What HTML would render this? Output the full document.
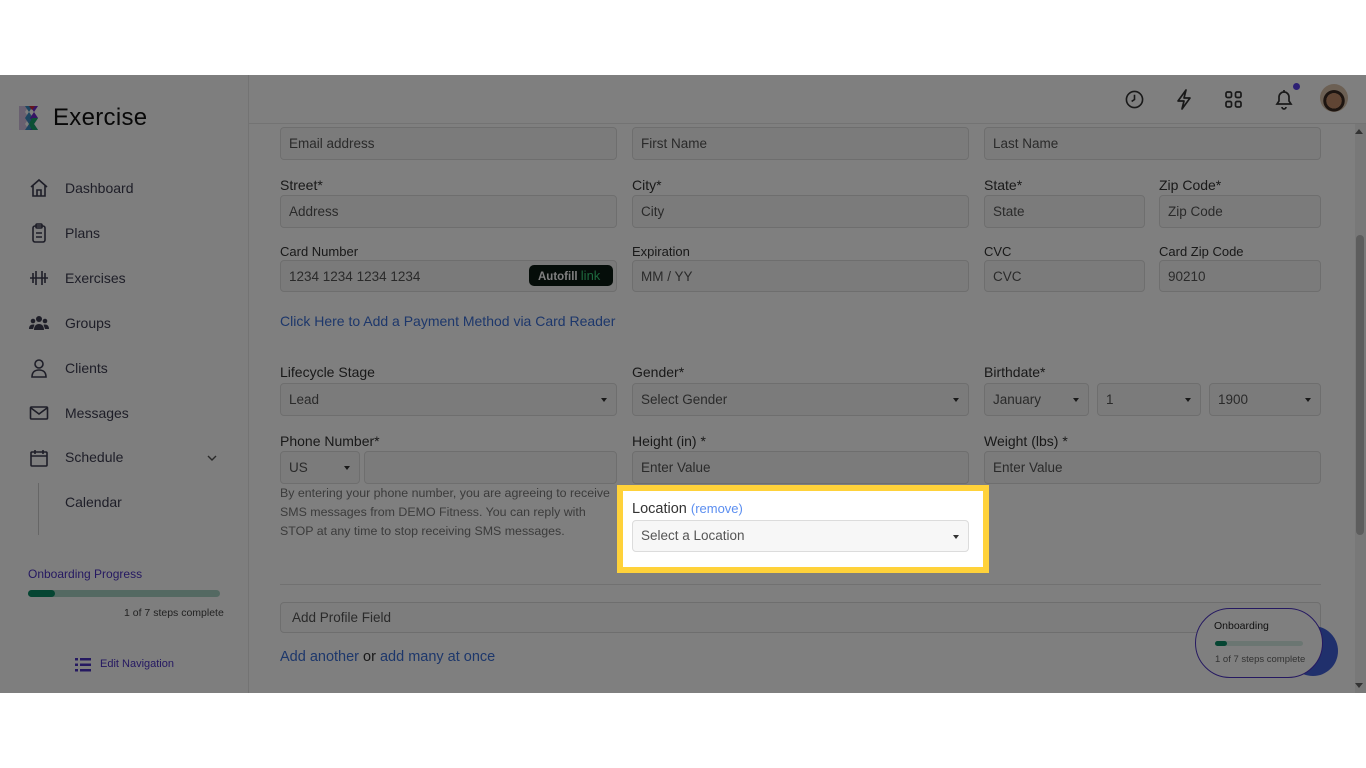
<!DOCTYPE html>
<html><head><meta charset="utf-8"><style>
*{box-sizing:border-box;margin:0;padding:0}
body{width:1366px;height:768px;background:#fff;font-family:"Liberation Sans",Arial,sans-serif;position:relative;overflow:hidden}
.a{position:absolute}
.app{left:0;top:75px;width:1366px;height:618px;background:#fff;overflow:hidden}
.side{left:0;top:0;width:249px;height:618px;background:#fcfcfc;border-right:1px solid #e6e6e6}
.hdr{left:249px;top:0;width:1117px;height:49px;border-bottom:1px solid #e6e6e6;background:#fff}
.lbl{font-size:14px;color:#333}
.in{border:1px solid #dcdcdc;border-radius:4px;background:#f7f7f7;height:33px;font-size:13.5px;color:#555;padding:0 8px;line-height:31px}
.sel::after{content:"";position:absolute;right:9px;top:14px;border:3.5px solid transparent;border-top:4px solid #333}
.nav{font-size:14px;color:#3d3d50;left:65px}
.ic{left:29px;width:20px;height:20px}
.link{color:#3b6fd6}
</style></head><body>
<div class="a app">
 <div class="a side">
  <svg class="a" style="left:17px;top:29px" width="27" height="27" viewBox="0 0 27 27"><path d="M2 2h10l-4 6 4 6-4 6 4 6H2z" fill="#c7b0d8" opacity=".8"/><path d="M8 2h8l-4 6 4 6-4 6 4 6H8l4-6-4-6 4-6z" fill="#3a8ac0"/><path d="M13 2h8l-4 6 4 6-4 6 4 6h-8l4-6-4-6 4-6z" fill="#6a28c8"/><path d="M15 14h6l-4 6 4 6h-6l-3-6z" fill="#16a06a"/><path d="M12 2h6l-3 4z" fill="#c82838"/></svg>
  <div class="a" style="left:53px;top:29px;font-size:24px;color:#111;letter-spacing:.3px">Exercise</div>
  <svg class="a ic" style="top:103px" viewBox="0 0 20 20" fill="none" stroke="#3d3d50" stroke-width="1.6"><path d="M2 9l8-7 8 7M4 7v11h12V7M8 18v-6h4v6"/></svg>
  <div class="a nav" style="top:105px">Dashboard</div>
  <svg class="a ic" style="top:148px" viewBox="0 0 20 20" fill="none" stroke="#3d3d50" stroke-width="1.6"><rect x="4" y="3" width="12" height="16" rx="2"/><rect x="7" y="1" width="6" height="4" rx="1"/><path d="M7 10h6M7 14h6"/></svg>
  <div class="a nav" style="top:150px">Plans</div>
  <svg class="a ic" style="top:193px" viewBox="0 0 20 20" fill="none" stroke="#3d3d50" stroke-width="1.6"><path d="M1 10h18M4 5v10M7 3v14M13 3v14M16 5v10"/></svg>
  <div class="a nav" style="top:195px">Exercises</div>
  <svg class="a ic" style="top:238px" viewBox="0 0 20 20" fill="#3d3d50"><circle cx="10" cy="6" r="3"/><circle cx="4" cy="8" r="2.3"/><circle cx="16" cy="8" r="2.3"/><path d="M5 17c0-4 2-6 5-6s5 2 5 6zM0 16c0-3 1.5-4.5 4-4.5 1 0 1.5.3 1.5.3L4 16zM20 16c0-3-1.5-4.5-4-4.5-1 0-1.5.3-1.5.3L16 16z"/></svg>
  <div class="a nav" style="top:240px">Groups</div>
  <svg class="a ic" style="top:283px" viewBox="0 0 20 20" fill="none" stroke="#3d3d50" stroke-width="1.6"><circle cx="10" cy="6" r="4"/><path d="M3 19c0-5 3-7 7-7s7 2 7 7z"/></svg>
  <div class="a nav" style="top:285px">Clients</div>
  <svg class="a ic" style="top:328px" viewBox="0 0 20 20" fill="none" stroke="#3d3d50" stroke-width="1.6"><rect x="1.5" y="4" width="17" height="12" rx="1"/><path d="M2 5l8 6 8-6"/></svg>
  <div class="a nav" style="top:330px">Messages</div>
  <svg class="a ic" style="top:373px" viewBox="0 0 20 20" fill="none" stroke="#3d3d50" stroke-width="1.6"><rect x="2" y="4" width="16" height="14" rx="1"/><path d="M2 8h16M6 2v4M14 2v4"/></svg>
  <div class="a nav" style="top:374px">Schedule</div>
  <svg class="a" style="left:206px;top:378px" width="12" height="10" viewBox="0 0 12 10" fill="none" stroke="#555" stroke-width="1.4"><path d="M2 3l4 4 4-4"/></svg>
  <div class="a" style="left:38px;top:408px;width:1px;height:52px;background:#ccc"></div>
  <div class="a nav" style="top:419px">Calendar</div>
  <div class="a" style="left:28px;top:492px;font-size:12px;color:#4b32c3">Onboarding Progress</div>
  <div class="a" style="left:28px;top:515px;width:192px;height:7px;border-radius:4px;background:#a9d3c5"></div>
  <div class="a" style="left:28px;top:515px;width:27px;height:7px;border-radius:4px;background:#0a8a64"></div>
  <div class="a" style="left:124px;top:532px;font-size:10.5px;color:#444">1 of 7 steps complete</div>
  <svg class="a" style="left:75px;top:583px" width="16" height="14" viewBox="0 0 16 14" fill="#4b32c3"><rect x="0" y="0" width="3" height="2.5"/><rect x="0" y="5.5" width="3" height="2.5"/><rect x="0" y="11" width="3" height="2.5"/><rect x="5" y="0" width="11" height="2.5"/><rect x="5" y="5.5" width="11" height="2.5"/><rect x="5" y="11" width="11" height="2.5"/></svg>
  <div class="a" style="left:100px;top:583px;font-size:11px;color:#4b32c3">Edit Navigation</div>
 </div>
 <div class="a hdr">
  <svg class="a" style="left:876px;top:15px" width="19" height="19" viewBox="0 0 20 20" fill="none" stroke="#333" stroke-width="1.7"><circle cx="10" cy="10" r="8.5"/><path d="M10 5v5l-3 2"/></svg>
  <svg class="a" style="left:927px;top:14px" width="16" height="21" viewBox="0 0 16 21" fill="none" stroke="#333" stroke-width="1.7" stroke-linejoin="round"><path d="M10 1L2 12h6l-2 8 8-11H8z"/></svg>
  <svg class="a" style="left:976px;top:16px" width="17" height="17" viewBox="0 0 17 17" fill="none" stroke="#333" stroke-width="1.7"><rect x="1" y="1" width="5.5" height="5.5" rx="1.5"/><rect x="10.5" y="1" width="5.5" height="5.5" rx="1.5"/><rect x="1" y="10.5" width="5.5" height="5.5" rx="1.5"/><rect x="10.5" y="10.5" width="5.5" height="5.5" rx="1.5"/></svg>
  <svg class="a" style="left:1025px;top:14px" width="20" height="21" viewBox="0 0 20 21" fill="none" stroke="#333" stroke-width="1.7"><path d="M3 15h14l-2-3V8a5 5 0 00-10 0v4z"/><path d="M8 18a2 2 0 004 0M10 1v2"/></svg>
  <div class="a" style="left:1044px;top:8px;width:7px;height:7px;border-radius:50%;background:#5a40e8"></div>
  <div class="a" style="left:1071px;top:9px;width:28px;height:28px;border-radius:50%;background:radial-gradient(circle at 50% 60%,#c08a68 0 35%,#3a2a22 36% 48%,#d8c0a8 50%)"></div>
 </div>
 <div class="a" style="left:1355px;top:49px;width:11px;height:569px;background:#f1f1f1"></div>
 <div class="a" style="left:1356px;top:160px;width:8px;height:300px;border-radius:4px;background:#bbb"></div>
 <div class="a" style="left:1355px;top:54px;border:4px solid transparent;border-bottom:5px solid #666;border-top:0"></div>
 <div class="a" style="left:1355px;top:608px;border:4px solid transparent;border-top:5px solid #666;border-bottom:0"></div>
</div>

<div class="a in" style="left:280px;top:127px;width:337px">Email address</div>
<div class="a in" style="left:632px;top:127px;width:337px">First Name</div>
<div class="a in" style="left:984px;top:127px;width:337px">Last Name</div>
<div class="a lbl" style="left:280px;top:177px">Street*</div>
<div class="a lbl" style="left:632px;top:177px">City*</div>
<div class="a lbl" style="left:984px;top:177px">State*</div>
<div class="a lbl" style="left:1159px;top:177px">Zip Code*</div>
<div class="a in" style="left:280px;top:195px;width:337px">Address</div>
<div class="a in" style="left:632px;top:195px;width:337px">City</div>
<div class="a in" style="left:984px;top:195px;width:161px">State</div>
<div class="a in" style="left:1159px;top:195px;width:162px">Zip Code</div>
<div class="a lbl" style="left:280px;top:244px;font-size:13px">Card Number</div>
<div class="a lbl" style="left:632px;top:244px;font-size:13px">Expiration</div>
<div class="a lbl" style="left:984px;top:244px;font-size:13px">CVC</div>
<div class="a lbl" style="left:1159px;top:244px;font-size:13px">Card Zip Code</div>
<div class="a in" style="left:280px;top:260px;width:337px;height:32px;background:#f5f5f5">1234 1234 1234 1234</div>
<div class="a" style="left:529px;top:265px;width:84px;height:21px;border-radius:5px;background:#0b1a12;color:#fff;font-size:11.5px;font-weight:bold;line-height:21px;padding-left:9px">Autofill <span style="color:#3ad07a;font-weight:normal;font-size:13px">link</span></div>
<div class="a in" style="left:632px;top:260px;width:337px;height:32px">MM / YY</div>
<div class="a in" style="left:984px;top:260px;width:161px;height:32px">CVC</div>
<div class="a in" style="left:1159px;top:260px;width:162px;height:32px">90210</div>
<div class="a link" style="left:280px;top:313px;font-size:14px">Click Here to Add a Payment Method via Card Reader</div>
<div class="a lbl" style="left:280px;top:364px">Lifecycle Stage</div>
<div class="a lbl" style="left:632px;top:364px">Gender*</div>
<div class="a lbl" style="left:984px;top:364px">Birthdate*</div>
<div class="a in sel" style="left:280px;top:383px;width:337px">Lead</div>
<div class="a in sel" style="left:632px;top:383px;width:337px">Select Gender</div>
<div class="a in sel" style="left:984px;top:383px;width:105px">January</div>
<div class="a in sel" style="left:1097px;top:383px;width:104px">1</div>
<div class="a in sel" style="left:1209px;top:383px;width:112px">1900</div>
<div class="a lbl" style="left:280px;top:433px">Phone Number*</div>
<div class="a lbl" style="left:632px;top:433px">Height (in) *</div>
<div class="a lbl" style="left:984px;top:433px">Weight (lbs) *</div>
<div class="a in sel" style="left:280px;top:451px;width:80px">US</div>
<div class="a in" style="left:364px;top:451px;width:253px"></div>
<div class="a in" style="left:632px;top:451px;width:337px">Enter Value</div>
<div class="a in" style="left:984px;top:451px;width:337px">Enter Value</div>
<div class="a" style="left:280px;top:484px;width:345px;font-size:12.4px;line-height:19px;color:#777;white-space:nowrap">By entering your phone number, you are agreeing to receive<br>SMS messages from DEMO Fitness. You can reply with<br>STOP at any time to stop receiving SMS messages.</div>
<div class="a" style="left:280px;top:584px;width:1041px;height:1px;background:#e2e2e2"></div>
<div class="a in" style="left:280px;top:602px;width:1041px;height:31px;line-height:29px;padding-left:11px;background:#fafafa">Add Profile Field</div>
<div class="a" style="left:280px;top:649px;font-size:14.5px;color:#333"><span class="link">Add another</span> or <span class="link">add many at once</span></div>
<div class="a" style="left:1288px;top:626px;width:50px;height:50px;border-radius:50%;background:#4060d8"></div>
<div class="a" style="left:1195px;top:608px;width:128px;height:70px;border-radius:35px;background:#fff;border:1.5px solid #4b32c3"></div>
<div class="a" style="left:1214px;top:620px;font-size:10.5px;color:#222">Onboarding</div>
<div class="a" style="left:1215px;top:641px;width:88px;height:5px;border-radius:3px;background:#d6ece4"></div>
<div class="a" style="left:1215px;top:641px;width:12px;height:5px;border-radius:3px;background:#0a8a64"></div>
<div class="a" style="left:1215px;top:654px;font-size:9.5px;color:#666">1 of 7 steps complete</div>

<div class="a" style="left:617px;top:485px;width:372px;height:88px;box-shadow:0 0 0 2000px rgba(0,0,0,.5);clip-path:inset(-410px -1000px -120px -1000px)"></div>
<div class="a" style="left:0;top:0;width:1366px;height:75px;background:#fff"></div>
<div class="a" style="left:0;top:693px;width:1366px;height:75px;background:#fff"></div>
<div class="a" style="left:617px;top:485px;width:372px;height:88px;border:6px solid #ffd23a;background:#fff"></div>
<div class="a lbl" style="left:632px;top:501px;font-size:14.5px">Location <span style="color:#5b8ef0;font-size:13px">(remove)</span></div>
<div class="a in sel" style="left:632px;top:520px;width:337px;height:32px;line-height:30px">Select a Location</div>
</body></html>
